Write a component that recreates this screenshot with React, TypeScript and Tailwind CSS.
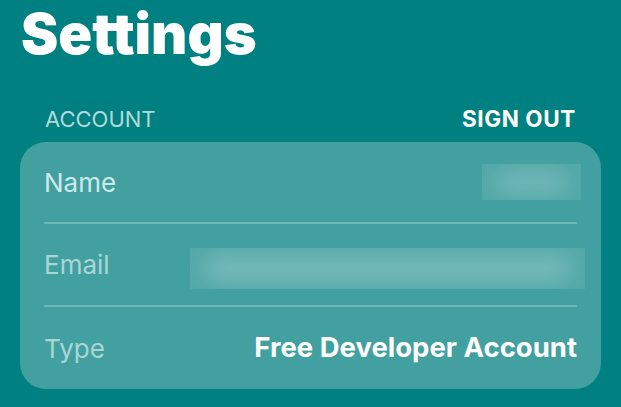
import React from "react";

function Blur({ w, h }: { w: number; h: number }) {
  return (
    <div
      className="relative overflow-hidden bg-white/[0.08]"
      style={{ width: w, height: h }}
    >
      <div className="absolute inset-x-3 inset-y-2 rounded-full bg-white/25 blur-md" />
    </div>
  );
}

export default function App() {
  return (
    <div
      className="w-[621px] h-[407px] bg-[#008080] overflow-hidden"
      style={{ fontFamily: "Inter, 'Noto Sans', sans-serif" }}
    >
      <h1 className="pl-[21px] pt-[2px] text-[56px] leading-[64px] font-black text-white">
        Settings
      </h1>
      <div className="mt-[38px] px-[45px] flex items-center justify-between h-[30px]">
        <span className="text-[22px] text-[#b0dada]">ACCOUNT</span>
        <span className="text-[22.5px] font-bold text-white tracking-[0.6px]">SIGN OUT</span>
      </div>
      <div className="mx-[20px] mt-[8px] rounded-[26px] bg-[#43a0a0] px-[24px]">
        <div className="h-[82px] flex items-center justify-between border-b-2 border-[#6db7b7]">
          <span className="text-[26px] text-[#cdeaea]">Name</span>
          <div className="-mr-[4px]">
            <Blur w={99} h={36} />
          </div>
        </div>
        <div className="h-[83px] flex items-center justify-between border-b-2 border-[#6db7b7]">
          <span className="text-[26px] text-[#a9d6d6]">Email</span>
          <div className="-mr-[8px] mt-[8px]">
            <Blur w={395} h={41} />
          </div>
        </div>
        <div className="h-[82px] flex items-center justify-between">
          <span className="text-[26px] text-[#a9d6d6]">Type</span>
          <span className="text-[27.5px] font-bold text-white">Free Developer Account</span>
        </div>
      </div>
    </div>
  );
}
